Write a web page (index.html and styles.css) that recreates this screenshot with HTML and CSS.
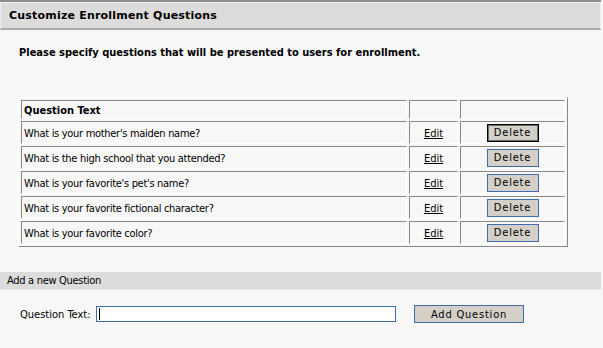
FILE: index.html
```html
<!DOCTYPE html>
<html>
<head>
<meta charset="utf-8">
<title>Customize Enrollment Questions</title>
<link rel="stylesheet" href="styles.css">
</head>
<body>
<div class="page-header">
  <div class="page-header-inner">Customize Enrollment Questions</div>
</div>
<p class="intro">Please specify questions that will be presented to users for enrollment.</p>
<table class="questions">
  <tr class="head-row">
    <th class="col-text">Question Text</th>
    <th class="col-edit"></th>
    <th class="col-del"></th>
  </tr>
  <tr>
    <td class="col-text">What is your mother's maiden name?</td>
    <td class="col-edit"><a href="#" class="edit">Edit</a></td>
    <td class="col-del"><button class="btn btn-default" type="button">Delete</button></td>
  </tr>
  <tr>
    <td class="col-text">What is the high school that you attended?</td>
    <td class="col-edit"><a href="#" class="edit">Edit</a></td>
    <td class="col-del"><button class="btn" type="button">Delete</button></td>
  </tr>
  <tr>
    <td class="col-text">What is your favorite's pet's name?</td>
    <td class="col-edit"><a href="#" class="edit">Edit</a></td>
    <td class="col-del"><button class="btn" type="button">Delete</button></td>
  </tr>
  <tr>
    <td class="col-text">What is your favorite fictional character?</td>
    <td class="col-edit"><a href="#" class="edit">Edit</a></td>
    <td class="col-del"><button class="btn" type="button">Delete</button></td>
  </tr>
  <tr>
    <td class="col-text">What is your favorite color?</td>
    <td class="col-edit"><a href="#" class="edit">Edit</a></td>
    <td class="col-del"><button class="btn" type="button">Delete</button></td>
  </tr>
</table>
<div class="section-band">Add a new Question</div>
<div class="add-form">
  <label class="add-label" for="qtext">Question Text:</label>
  <span class="input-box" id="qtext"><span class="caret"></span></span>
  <button class="btn btn-add" type="button">Add Question</button>
</div>
</body>
</html>
```
FILE: styles.css
```css
html, body {
  margin: 0;
  padding: 0;
  background: #f7f7f7;
}
body {
  font-family: "DejaVu Sans Condensed", "DejaVu Sans", sans-serif;
  font-size: 11px;
  letter-spacing: -0.3px;
  color: #000;
  width: 603px;
  height: 348px;
  overflow: hidden;
}
.page-header {
  width: 601px;
  border-top: 2px solid #8c8c8c;
}
.page-header-inner {
  box-sizing: border-box;
  height: 28px;
  background: #dcdcdc;
  border-top: 1px solid #f2f2f2;
  border-left: 1px solid #ececec;
  border-right: 1px solid #f0f0f0;
  border-bottom: 2px solid #ababab;
  padding-left: 8px;
  line-height: 25px;
  font-family: "DejaVu Sans", sans-serif;
  font-weight: bold;
  letter-spacing: 0.2px;
}
.intro {
  margin: 16px 0 0 19px;
  font-weight: bold;
  letter-spacing: 0;
  line-height: 13px;
  height: 13px;
}
.questions {
  margin: 38px 0 0 18px;
  border-collapse: separate;
  border-spacing: 2px;
  table-layout: fixed;
  width: 550px;
  border-top: 1px solid #ffffff;
  border-left: 1px solid #ffffff;
  border-right: 1px solid #888888;
  border-bottom: 1px solid #888888;
}
.questions th,
.questions td {
  box-sizing: border-box;
  border-top: 1px solid #888888;
  border-left: 1px solid #888888;
  border-right: 1px solid #ffffff;
  border-bottom: 1px solid #ffffff;
  padding: 1px 0 0 2px;
  height: 23px;
  text-align: left;
  white-space: nowrap;
}
.questions .head-row th {
  height: 19px;
  font-weight: bold;
  letter-spacing: 0;
}
.questions .col-text { width: 386px; }
.questions .col-edit { width: 49px; text-align: center; padding: 1px 0 0 0; }
.questions .col-del { width: 105px; text-align: center; padding: 0; }
.edit {
  color: #000;
  text-decoration: underline;
  letter-spacing: 0;
}
.btn {
  box-sizing: border-box;
  font-family: "DejaVu Sans Condensed", "DejaVu Sans", sans-serif;
  font-size: 11px;
  letter-spacing: 0.8px;
  color: #000;
  background: #d4d0c8;
  border: 1px solid #3d6db0;
  border-radius: 0;
  padding: 0;
  margin: 0;
  height: 18px;
  width: 52px;
  line-height: 15px;
  vertical-align: middle;
}
.btn-default {
  border-color: #000;
  box-shadow: inset 0 0 0 1px #6a6a6a;
}
.section-band {
  margin-top: 25px;
  width: 601px;
  height: 18px;
  box-sizing: border-box;
  background: #dcdcdc;
  padding-left: 7px;
  line-height: 17px;
  border-bottom: 1px solid #ebebeb;
}
.add-form {
  display: flex;
  align-items: center;
  margin: 15px 0 0 20px;
  height: 18px;
}
.add-label {
  width: 76px;
  letter-spacing: 0;
}
.input-box {
  box-sizing: border-box;
  width: 300px;
  height: 16px;
  background: #ffffff;
  border: 1px solid #3d6db0;
  display: flex;
  align-items: center;
  padding-left: 2px;
}
.caret {
  display: block;
  width: 1px;
  height: 12px;
  background: #000;
}
.btn-add {
  margin-left: 18px;
  width: 110px;
  height: 18px;
}
```
